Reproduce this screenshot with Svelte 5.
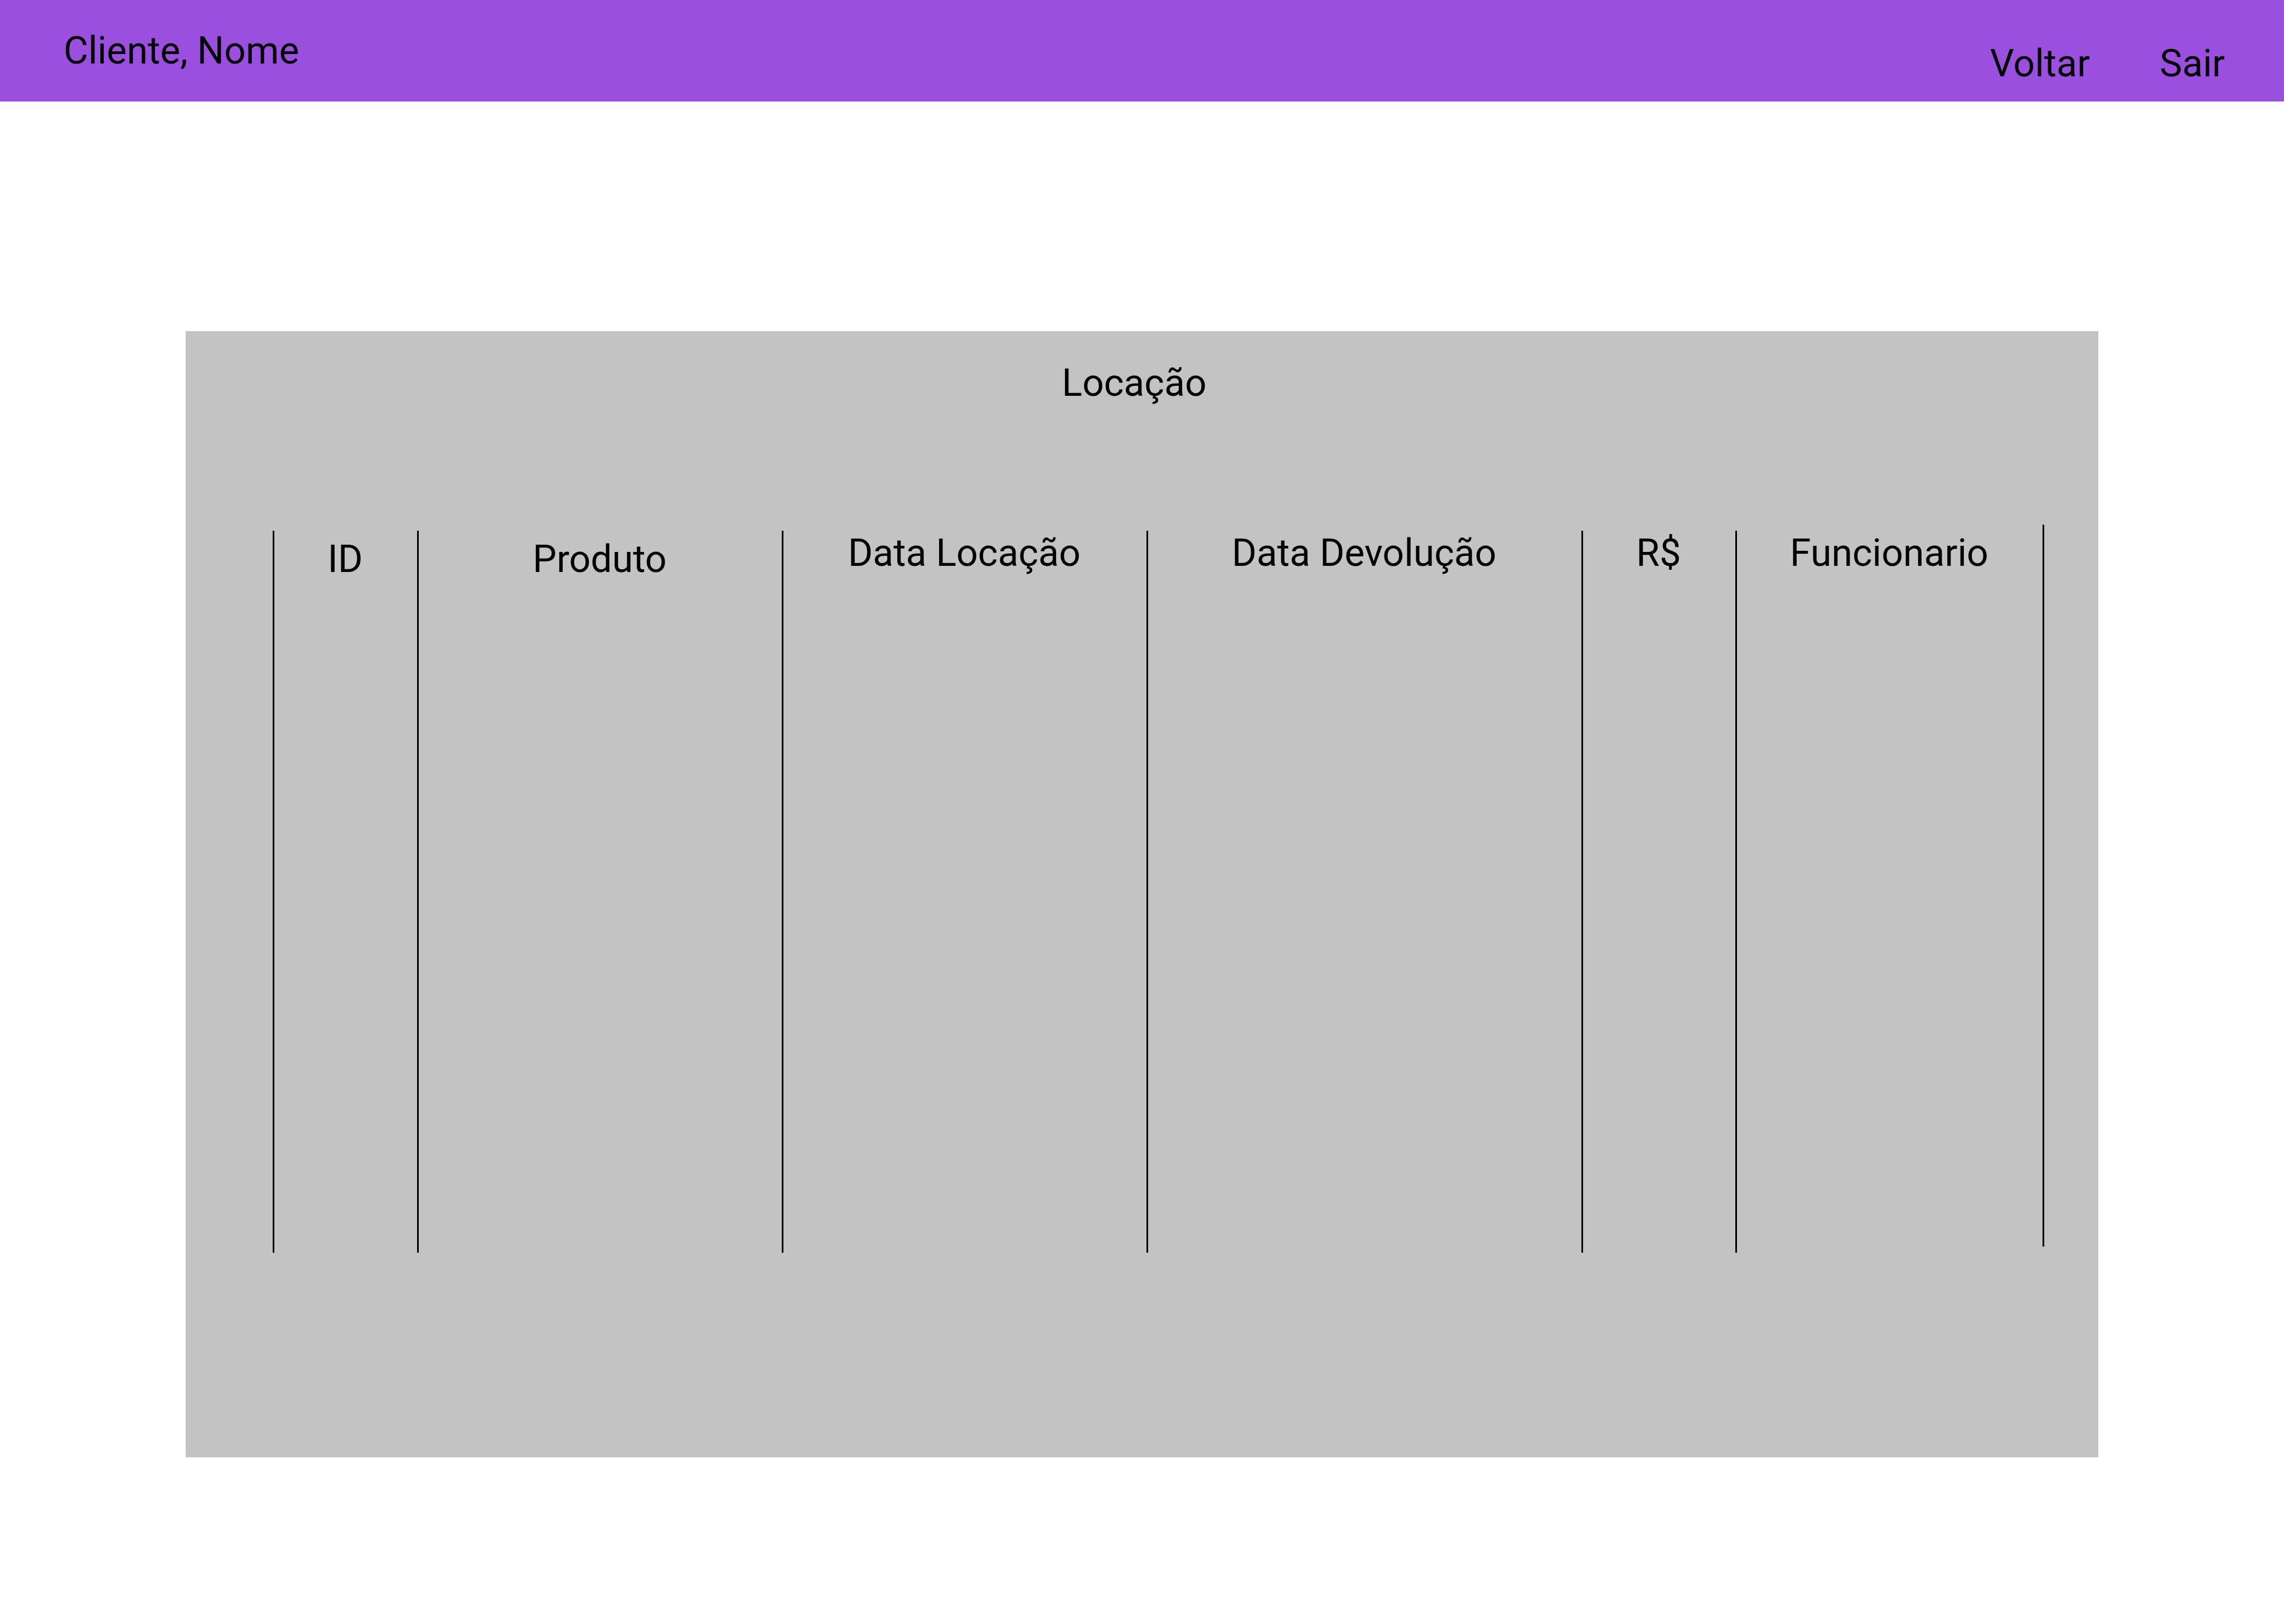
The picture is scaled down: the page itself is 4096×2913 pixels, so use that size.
<script>
  const client = 'Cliente, Nome';

  const links = [
    { label: 'Voltar', href: '#voltar' },
    { label: 'Sair', href: '#sair' }
  ];

  // share: portion of the table width, in percent
  const columns = [
    { label: 'ID', share: 8.16, low: true },
    { label: 'Produto', share: 20.6, low: true },
    { label: 'Data Locação', share: 20.6 },
    { label: 'Data Devolução', share: 24.58 },
    { label: 'R$', share: 8.7 },
    { label: 'Funcionario', share: 17.36 }
  ];
</script>

<div class="page">
  <header>
    <span>{client}</span>
    <nav aria-label="Principal">
      {#each links as link}
        <a href={link.href}>{link.label}</a>
      {/each}
    </nav>
  </header>

  <main>
    <section class="panel" aria-labelledby="title">
      <h1 id="title">Locação</h1>
      <div class="ledger">
        <table aria-labelledby="title">
          <colgroup>
            {#each columns as column}
              <col style:width="{column.share}%" />
            {/each}
          </colgroup>
          <thead>
            <tr>
              {#each columns as column}
                <th scope="col" class:low={column.low}>{column.label}</th>
              {/each}
            </tr>
          </thead>
          <tbody>
            <tr>
              {#each columns as column}
                <td></td>
              {/each}
            </tr>
          </tbody>
        </table>
        <div class="end-rule"></div>
      </div>
    </section>
  </main>
</div>

<style>
  :global(body) {
    margin: 0;
    background: #fff;
  }

  .page {
    display: flex;
    flex-direction: column;
    min-height: 100vh;
    font-family: Roboto, 'Liberation Sans', sans-serif;
    font-size: 68px;
    line-height: 80px;
    color: #000;
  }

  header {
    display: flex;
    justify-content: space-between;
    align-items: flex-start;
    padding: 51px 106px 28px 114px;
    background: #9a4fde;
  }

  nav {
    display: flex;
    gap: 125px;
    padding-top: 23px;
  }

  a {
    color: inherit;
    text-decoration: none;
  }

  main {
    flex: 1;
    display: flex;
    padding: 412px 333px 299px;
  }

  .panel {
    flex: 1;
    display: flex;
    flex-direction: column;
    padding: 53px 97px 367px 156px;
    background: #c3c3c3;
  }

  h1 {
    align-self: center;
    margin: 0 87px 214px 0;
    font: inherit;
  }

  .ledger {
    flex: 1;
    display: flex;
  }

  table {
    flex: 1;
    margin-top: 11px;
    table-layout: fixed;
    border-collapse: separate;
    border-spacing: 0;
  }

  th,
  td {
    padding: 0 2px 0 0;
    border-left: 3px solid #000;
  }

  th {
    height: 91px;
    font-weight: 400;
    text-align: center;
    vertical-align: top;
    white-space: nowrap;
  }

  th.low {
    vertical-align: bottom;
  }

  .end-rule {
    width: 3px;
    margin-bottom: 11px;
    background: #000;
  }
</style>
